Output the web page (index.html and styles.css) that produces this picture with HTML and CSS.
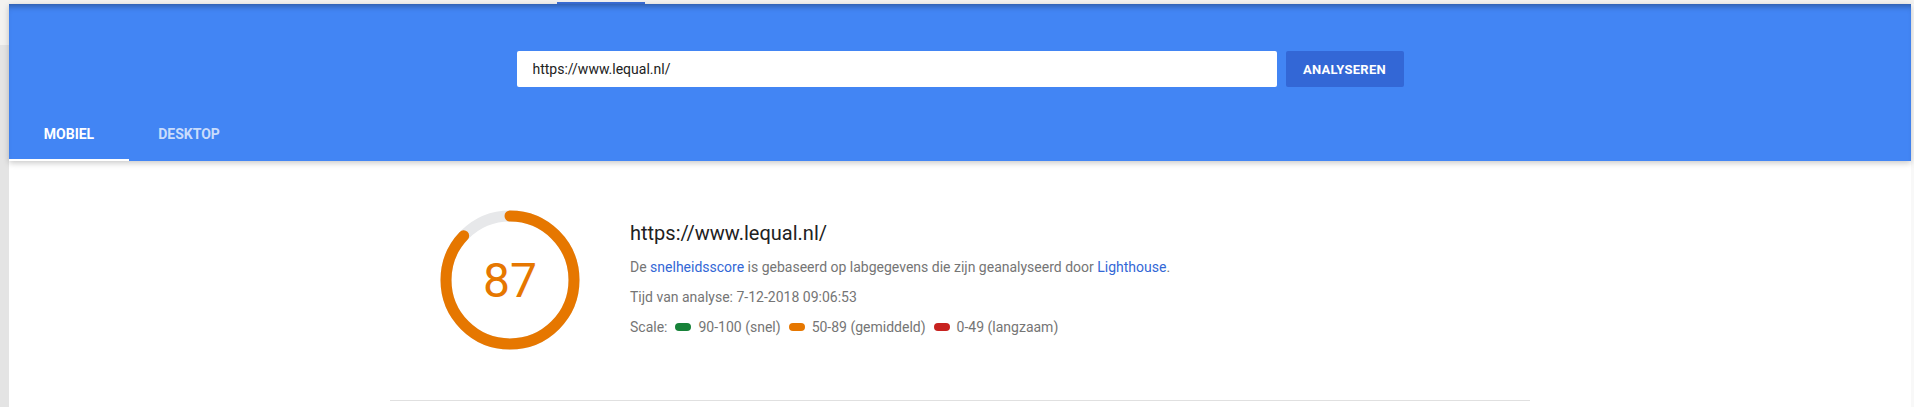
FILE: index.html
```html
<!DOCTYPE html>
<html lang="nl">
<head>
  <meta charset="UTF-8">
  <meta name="viewport" content="width=device-width, initial-scale=1.0">
  <title>PageSpeed Insights</title>
  <link rel="stylesheet" href="styles.css">
</head>
<body>
  <div class="page">
    <div class="gutter"></div>
    <div class="main">
      <div class="topstrip"><div class="top-indicator"></div></div>

      <header class="header">
        <form class="search">
          <input class="search-input" type="text" value="https://www.lequal.nl/">
          <button class="btn" type="button">ANALYSEREN</button>
        </form>
        <nav class="tabs">
          <a class="tab active">MOBIEL</a>
          <a class="tab">DESKTOP</a>
        </nav>
      </header>

      <section class="result">
        <div class="summary">
          <svg class="gauge" width="140" height="140" viewBox="0 0 140 140">
            <circle cx="70" cy="70" r="64" fill="none" stroke="#e7e8ea" stroke-width="11"/>
            <!-- 87% van de omtrek (2*pi*64 = 402.1) -->
            <circle cx="70" cy="70" r="64" fill="none" stroke="#e67700" stroke-width="11"
                    stroke-linecap="round" stroke-dasharray="349.8 402.1"
                    transform="rotate(-90 70 70)"/>
            <text x="70" y="87" text-anchor="middle" class="gauge-score">87</text>
          </svg>

          <div class="info">
            <h1 class="info-url">https://www.lequal.nl/</h1>
            <p class="info-line">De <a href="#">snelheidsscore</a> is gebaseerd op labgegevens die zijn geanalyseerd door <a href="#">Lighthouse</a>.</p>
            <p class="info-line">Tijd van analyse: 7-12-2018 09:06:53</p>
            <p class="info-line scale">
              <span>Scale:</span>
              <span class="pill fast"></span><span>90-100 (snel)</span>
              <span class="pill average"></span><span>50-89 (gemiddeld)</span>
              <span class="pill slow"></span><span>0-49 (langzaam)</span>
            </p>
          </div>
        </div>
      </section>
    </div>
    <div class="edge"></div>
  </div>
</body>
</html>
```

FILE: styles.css
```css
html, body {
  margin: 0;
  height: 100%;
}
body {
  font-family: Roboto, "Liberation Sans", Arial, sans-serif;
  background: #fff;
  color: #212121;
  overflow: hidden;
}
.page {
  display: flex;
  min-height: 100%;
}
.gutter {
  width: 9px;
  flex-shrink: 0;
  background: linear-gradient(#f3f2f0 45px, #e4e4e4 45px);
}
.edge {
  width: 3px;
  flex-shrink: 0;
  background: linear-gradient(#f3f2f0 4px, #f8f8f8 4px);
}
.main {
  flex: 1;
  min-width: 0;
}
.topstrip {
  height: 4px;
  background: #f3f2f0;
  display: flex;
}
.top-indicator {
  width: 88px;
  height: 2px;
  margin: 2px 0 0 548px;
  background: #3a6fd8;
}

/* header */
.header {
  position: relative;
  z-index: 1;
  background: #4285f4;
  padding-top: 47px;
  box-shadow: inset 0 6px 6px -4px rgba(0,0,0,0.35), 0 2px 6px rgba(0,0,0,0.22);
}
.search {
  display: flex;
  justify-content: center;
  gap: 9px;
  margin: 0;
}
.search-input {
  width: 760px;
  height: 36px;
  box-sizing: border-box;
  border: 0;
  border-radius: 2px;
  padding: 0 16px;
  font-family: inherit;
  font-size: 14px;
  color: #212121;
  outline: none;
}
.btn {
  width: 118px;
  height: 36px;
  border: 0;
  border-radius: 2px;
  background: #3367d6;
  color: #fff;
  font-family: inherit;
  font-size: 13px;
  font-weight: 700;
  letter-spacing: 0.3px;
  padding: 0;
}
.tabs {
  display: flex;
  margin-top: 26px;
}
.tab {
  width: 120px;
  box-sizing: border-box;
  padding: 11px 0 15px;
  line-height: 20px;
  text-align: center;
  font-size: 14px;
  font-weight: 700;
  color: rgba(255,255,255,0.72);
  border-bottom: 2px solid transparent;
}
.tab.active {
  color: #fff;
  border-bottom-color: #fff;
}

/* resultaat */
.result {
  max-width: 1140px;
  margin: 0 auto;
  padding: 49px 0 50px;
  border-bottom: 1px solid #e0e0e0;
}
.summary {
  display: flex;
  gap: 50px;
  padding-left: 50px;
}
.gauge {
  flex-shrink: 0;
  display: block;
}
.gauge-score {
  font-family: Roboto, "Liberation Sans", sans-serif;
  font-size: 48px;
  fill: #e67700;
}
.info {
  margin-top: 11px;
}
.info-url {
  margin: 0;
  font-size: 20px;
  font-weight: 400;
  line-height: 24px;
  color: #212121;
}
.info-line {
  margin: 10px 0 0;
  font-size: 14px;
  line-height: 20px;
  color: #757575;
}
.info-url + .info-line {
  margin-top: 12px;
}
.info-line a {
  color: #3367d6;
  text-decoration: none;
}
.scale {
  display: flex;
  align-items: center;
  gap: 7px;
}
.pill {
  display: inline-block;
  width: 16px;
  height: 8px;
  border-radius: 4px;
  margin-left: 1px;
}
.pill.fast { background: #178239; }
.pill.average { background: #e67700; }
.pill.slow { background: #c7221f; }
```
